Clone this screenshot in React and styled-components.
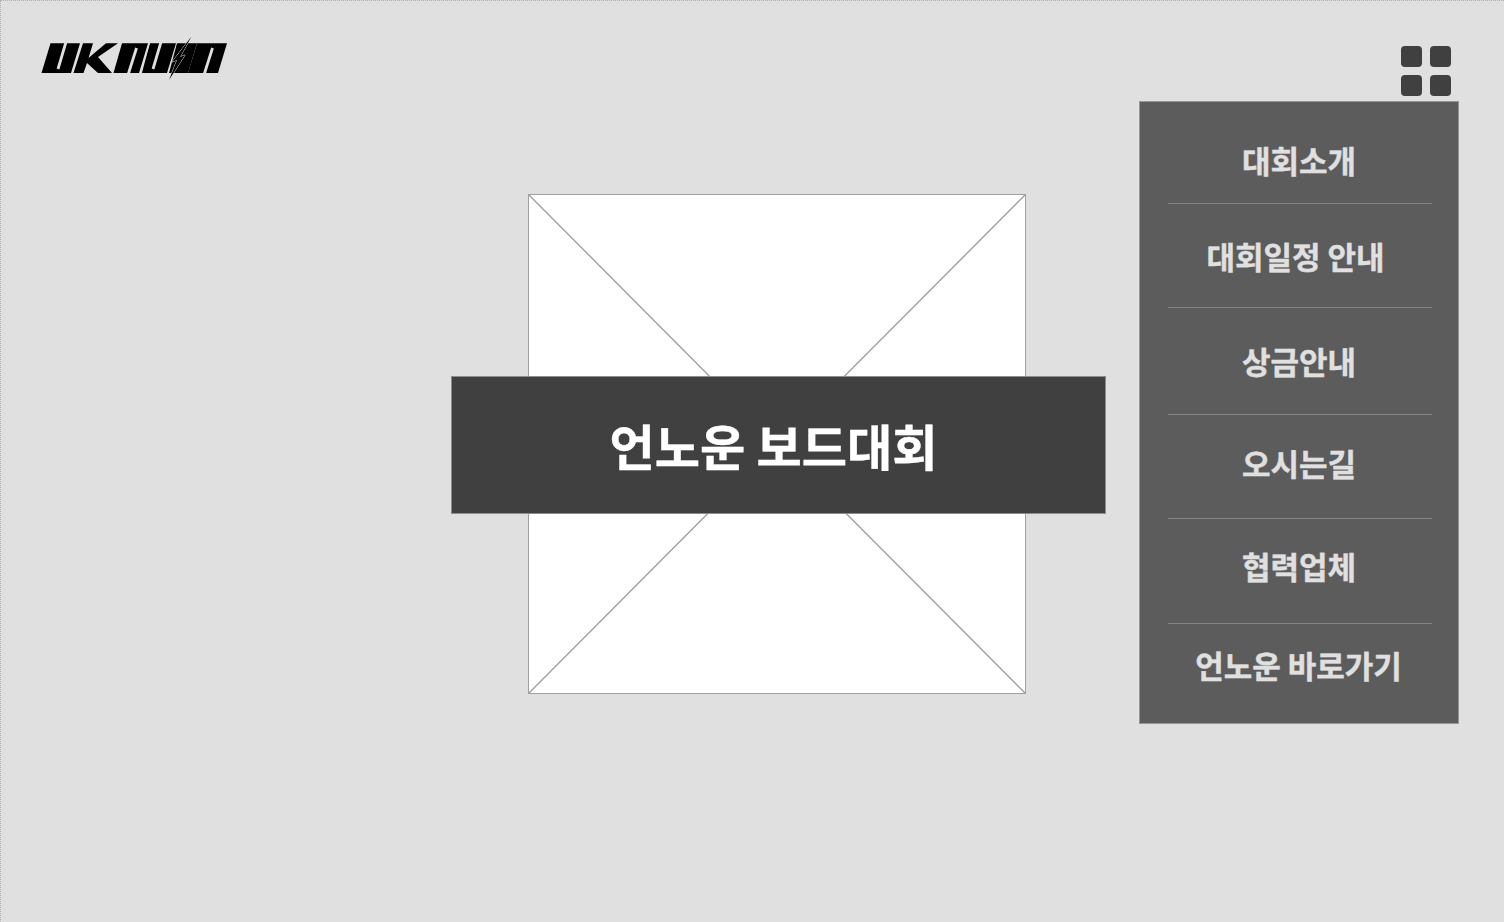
import React from 'react';
import styled, { createGlobalStyle } from 'styled-components';

const GlobalStyle = createGlobalStyle`
  html, body {
    margin: 0;
    padding: 0;
    background: #e0e0e0;
  }
  * {
    box-sizing: border-box;
  }
`;

const Page = styled.div`
  width: 1504px;
  height: 922px;
  overflow: hidden;
  background: #e0e0e0;
  border-top: 1px dotted #b0b0b0;
  border-left: 1px dotted #b0b0b0;
  font-family: "Noto Sans CJK KR", "Noto Sans", sans-serif;
`;

const Header = styled.header`
  display: flex;
  justify-content: space-between;
  align-items: flex-start;
  height: 100px;
  padding: 33px 53px 0 39px;
`;

const MenuButton = styled.div`
  display: grid;
  grid-template-columns: 21px 21px;
  grid-auto-rows: 21px;
  gap: 8px;
  margin-top: 12px;
`;

const MenuDot = styled.span`
  background: #404040;
  border-radius: 4px;
`;

const Main = styled.main`
  display: flex;
  align-items: flex-start;
  gap: 33px;
  padding-left: 450px;
`;

const Hero = styled.section`
  position: relative;
  width: 655px;
  padding: 93px 0 0 77px;
`;

const Placeholder = styled.div`
  width: 498px;
  height: 500px;
  background: #fff;
  border: 1px solid #a0a0a0;
`;

const CrossLines = styled.svg`
  display: block;
  width: 100%;
  height: 100%;
`;

const Banner = styled.h1`
  position: absolute;
  top: 275px;
  left: 0;
  display: flex;
  justify-content: center;
  align-items: center;
  width: 655px;
  height: 138px;
  margin: 0;
  padding: 0 10px 2px 0;
  background: #404040;
  border: 1px solid #8c8c8c;
  color: #fff;
  font-size: 49.2px;
  font-weight: 700;
  -webkit-text-stroke: 0.4px #fff;
`;

const SideMenu = styled.nav`
  width: 320px;
  height: 623px;
  padding: 0 26px 0 28px;
  background: #5c5c5c;
  border: 1px solid #969696;
`;

const MenuItem = styled.a`
  display: block;
  height: ${(p) => p.$height}px;
  padding-top: ${(p) => p.$top}px;
  padding-right: ${(p) => p.$shift}px;
  border-bottom: ${(p) => (p.$last ? 'none' : '1px solid #858585')};
  color: #e0e0e0;
  font-size: 31px;
  font-weight: 700;
  line-height: 44px;
  text-align: center;
  white-space: nowrap;
  -webkit-text-stroke: 0.4px #e0e0e0;
`;

const menuItems = [
  { label: '대회소개', height: 102, top: 36, shift: 2 },
  { label: '대회일정 안내', height: 104, top: 30, shift: 9 },
  { label: '상금안내', height: 107, top: 31, shift: 2 },
  { label: '오시는길', height: 104, top: 26, shift: 2 },
  { label: '협력업체', height: 105, top: 25, shift: 2 },
  { label: '언노운 바로가기', height: 98, top: 19, shift: 3 },
];

function Logo() {
  const bg = '#e0e0e0';
  return (
    <svg width="190" height="48" viewBox="40 34 190 48">
      <polygon points="50.5,43.3 80,43.3 71,73 41.5,73" />
      <polygon points="83,43.3 93,43.3 88.5,58 106,43.3 118,43.3 98,57 112,73 98,73 87,63 83.5,73 73.5,73" />
      <polygon points="122,43.3 148,43.3 139,73 113.5,73" />
      <polygon points="150,43.3 176,43.3 167,73 141,73" />
      <polygon points="177,43.3 197,43.3 188,73 169,73" />
      <polygon points="197,43.3 227,43.3 218,73 188,73" />
      <g stroke={bg} strokeWidth="2.8" fill="none">
        <line x1="66" y1="42" x2="58" y2="69" />
        <line x1="136.5" y1="48" x2="128" y2="75" />
        <line x1="161" y1="42" x2="153" y2="69" />
        <line x1="212.5" y1="48" x2="204" y2="75" />
        <line x1="141" y1="74" x2="149.5" y2="42" strokeWidth="1.2" />
      </g>
      <polygon
        points="191.5,36.5 180,57 185,55 169,80 177,60 172,62"
        stroke={bg}
        strokeWidth="1"
        paintOrder="stroke"
      />
    </svg>
  );
}

export default function App() {
  return (
    <Page>
      <GlobalStyle />
      <Header>
        <Logo />
        <MenuButton>
          <MenuDot />
          <MenuDot />
          <MenuDot />
          <MenuDot />
        </MenuButton>
      </Header>
      <Main>
        <Hero>
          <Placeholder>
            <CrossLines viewBox="0 0 496 498" preserveAspectRatio="none">
              <line x1="0" y1="0" x2="496" y2="498" stroke="#a0a0a0" strokeWidth="1.4" />
              <line x1="496" y1="0" x2="0" y2="498" stroke="#a0a0a0" strokeWidth="1.4" />
            </CrossLines>
          </Placeholder>
          <Banner>언노운 보드대회</Banner>
        </Hero>
        <SideMenu>
          {menuItems.map((item, i) => (
            <MenuItem
              key={item.label}
              $height={item.height}
              $top={item.top}
              $shift={item.shift}
              $last={i === menuItems.length - 1}
            >
              {item.label}
            </MenuItem>
          ))}
        </SideMenu>
      </Main>
    </Page>
  );
}
